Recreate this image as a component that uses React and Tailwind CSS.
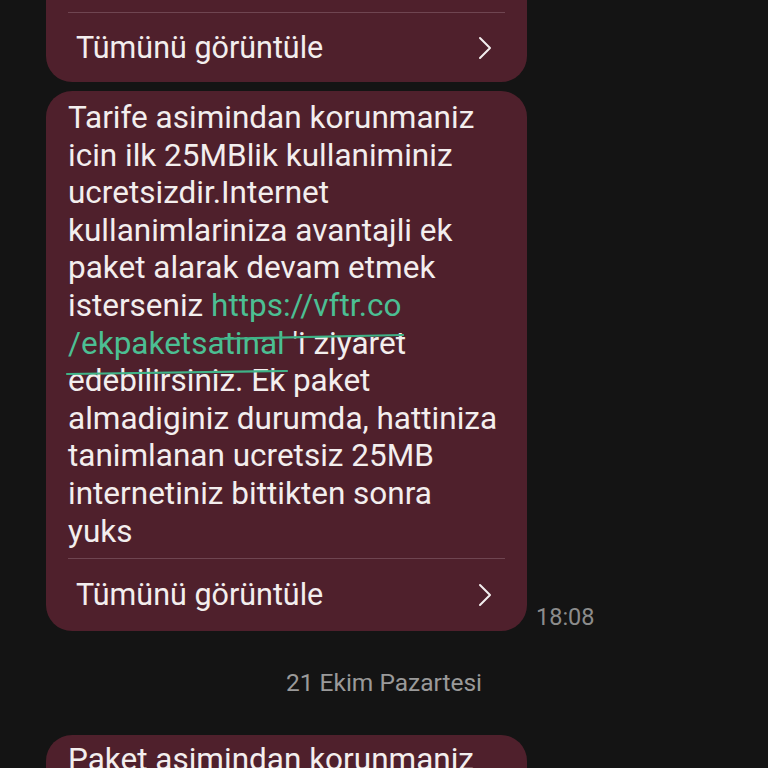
import React from 'react';

const Chevron = () => (
  <svg width="14" height="24" viewBox="0 0 14 24" fill="none" className="shrink-0">
    <path d="M2 2 L12 12 L2 22" stroke="#f3eeee" strokeWidth="2" strokeLinecap="round" strokeLinejoin="round" />
  </svg>
);

const ViewAll = ({ height }) => (
  <div className={`flex items-center justify-between pl-[30px] pr-[35px] ${height}`}>
    <span className="text-[30.5px] text-[#f3eeee]">Tümünü görüntüle</span>
    <Chevron />
  </div>
);

const Link = ({ children }) => <span className="text-[#4cbf93]">{children}</span>;

const App = () => {
  const lines = [
    'Tarife asimindan korunmaniz',
    'icin ilk 25MBlik kullaniminiz',
    'ucretsizdir.Internet',
    'kullanimlariniza avantajli ek',
    'paket alarak devam etmek',
    <>isterseniz <Link>https://vftr.co</Link></>,
    <><Link>/ekpaketsatinal </Link>'i ziyaret</>,
    'edebilirsiniz. Ek paket',
    'almadiginiz durumda, hattiniza',
    'tanimlanan ucretsiz 25MB',
    'internetiniz bittikten sonra',
    'yuks',
  ];

  return (
    <div className="h-[768px] w-[768px] overflow-hidden bg-[#141414] font-['Roboto','Liberation_Sans',sans-serif]">
      {/* previous message, cut off at the top */}
      <div className="ml-[46px] -mt-[30px] w-[481px] rounded-[26px] bg-[#4f202c] pt-[42px]">
        <div className="mx-[22px] h-px bg-[#6f4551]" />
        <ViewAll height="h-[69px]" />
      </div>

      <div className="mt-[9px] flex items-end">
        <div className="relative ml-[46px] w-[481px] rounded-[26px] bg-[#4f202c] pt-[8px]">
          <div className="px-[22px] text-[31.5px] leading-[37.6px] text-[#f3eeee]">
            {lines.map((l, i) => (
              <div key={i} className="whitespace-nowrap">{l}</div>
            ))}
          </div>
          <div className="mx-[22px] mt-[8px] h-px bg-[#6f4551]" />
          <ViewAll height="h-[72px]" />
          {/* hand drawn strike lines over the link */}
          <svg className="absolute left-0 top-0 pointer-events-none" width="481" height="400" viewBox="0 0 481 400">
            <path d="M166 248 L357 244" stroke="#3fb387" strokeWidth="2.2" strokeLinecap="round" fill="none" />
            <path d="M21 283 L241 280" stroke="#3fb387" strokeWidth="2.2" strokeLinecap="round" fill="none" />
          </svg>
        </div>
        <span className="mb-[1px] ml-[9px] text-[23.5px] leading-[26px] text-[#8c8c8c]">18:08</span>
      </div>

      <div className="mt-[38px] text-center text-[24.5px] leading-[28px] text-[#9a9a9a]">21 Ekim Pazartesi</div>

      <div className="ml-[46px] mt-[38px] w-[481px] rounded-[26px] bg-[#4f202c] pt-[6px]">
        <div className="px-[22px] text-[31.5px] leading-[37.6px] text-[#f3eeee]">
          <div className="whitespace-nowrap">Paket asimindan korunmaniz</div>
          <div className="whitespace-nowrap">icin ilk 25MBlik kullaniminiz</div>
        </div>
      </div>
    </div>
  );
};

export default App;
